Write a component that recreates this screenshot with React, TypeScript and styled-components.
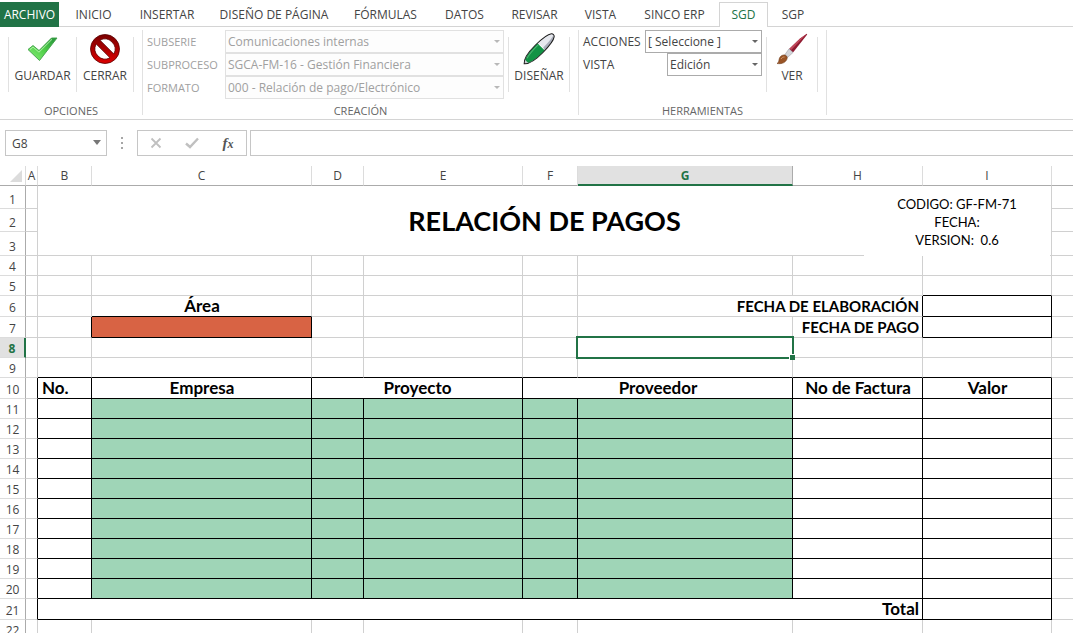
import React from "react";
import styled, { createGlobalStyle, css } from "styled-components";

const UI = `"Open Sans", "Noto Sans", sans-serif`;
const GREEN = "#217346";
const GRID = "#d0d0d0";
const BLACK = "#000000";

const GlobalStyle = createGlobalStyle`
  *, *::before, *::after { box-sizing: border-box; }
  html, body { margin: 0; height: 100%; }
  body { background: #fff; font-family: ${UI}; font-size: 12px; color: #444; overflow: hidden; }
  #root { height: 100%; }
  button, input, select { font: inherit; color: inherit; margin: 0; }
`;

const Window = styled.div`
  display: flex;
  flex-direction: column;
  height: 100vh;
  overflow: hidden;
`;

/* ---------- Tabs ---------- */

const TabBar = styled.nav`
  display: flex;
  height: 27px;
  padding-top: 2px;
  border-bottom: 1px solid #d4d4d4;
`;

const FileTab = styled.button`
  width: 59px;
  height: 25px;
  margin-right: 2px;
  padding: 0;
  border: 0;
  background: ${GREEN};
  color: #fff;
  white-space: nowrap;
`;

const Tab = styled.button<{ $width: number; $active?: boolean }>`
  flex: 0 0 ${(p) => p.$width}px;
  height: 25px;
  padding: 0 0 2px;
  border: 1px solid ${(p) => (p.$active ? "#d4d4d4" : "transparent")};
  border-bottom: 0;
  background: ${(p) => (p.$active ? "#fff" : "transparent")};
  color: ${(p) => (p.$active ? GREEN : "#444")};
  white-space: nowrap;
`;

/* ---------- Ribbon ---------- */

const Ribbon = styled.div`
  display: flex;
  height: 93px;
  padding: 3px 0 4px;
  border-bottom: 1px solid #d4d4d4;
`;

const Group = styled.section<{ $width: number }>`
  display: flex;
  flex-direction: column;
  justify-content: space-between;
  flex: 0 0 ${(p) => p.$width}px;
  border-right: 1px solid #e1e1e1;
`;

const GroupBody = styled.div<{ $pad?: number }>`
  display: flex;
  padding-left: ${(p) => p.$pad ?? 0}px;
`;

const GroupTitle = styled.h2`
  margin: 0;
  font-size: 11px;
  font-weight: 400;
  line-height: 8px;
  text-align: center;
  color: #666;
`;

const Commands = styled.div`
  display: flex;
  height: 55px;
  margin-top: 7px;
  border-left: 1px solid #e1e1e1;
`;

const Command = styled.button<{ $width: number }>`
  display: flex;
  flex-direction: column;
  align-items: center;
  width: ${(p) => p.$width}px;
  height: 55px;
  padding: 0;
  border: 0;
  border-right: 1px solid #e1e1e1;
  background: none;
  line-height: 16px;

  svg {
    display: block;
    flex: none;
    margin-top: -4px;
  }
`;

const CommandLabel = styled.span`
  margin-top: 3px;
`;

const Fields = styled.div<{ $width: number }>`
  display: flex;
  flex-direction: column;
  width: ${(p) => p.$width}px;
  margin-right: 4px;
`;

const Field = styled.div<{ $muted?: boolean }>`
  display: flex;
  justify-content: space-between;
  align-items: center;
  height: 23px;
  color: ${(p) => (p.$muted ? "#a0a0a0" : "#444")};

  label {
    font-size: ${(p) => (p.$muted ? 11 : 12)}px;
  }
`;

const SelectBox = styled.div<{ $width: number; $muted?: boolean }>`
  position: relative;
  width: ${(p) => p.$width}px;
  height: 23px;

  &::after {
    content: "";
    position: absolute;
    right: 4px;
    top: 10px;
    border: 3px solid transparent;
    border-top-color: ${(p) => (p.$muted ? "#b8b8b8" : "#666")};
    border-bottom: 0;
    pointer-events: none;
  }

  select {
    display: block;
    width: 100%;
    height: 23px;
    padding: 0 14px 0 2px;
    appearance: none;
    border: 1px solid ${(p) => (p.$muted ? "#e1e1e1" : "#ababab")};
    border-radius: 0;
    background: ${(p) => (p.$muted ? "#fdfdfd" : "#fff")};
    color: inherit;
    opacity: 1;
  }
`;

/* ---------- Formula bar ---------- */

const FormulaBar = styled.div`
  display: flex;
  align-items: center;
  padding: 10px 0 10px 5px;
`;

const NameBox = styled.div`
  position: relative;
  width: 102px;

  &::after {
    content: "";
    position: absolute;
    right: 6px;
    top: 10px;
    border: 4px solid transparent;
    border-top: 5px solid #777;
    border-bottom: 0;
  }

  input {
    display: block;
    width: 100%;
    height: 26px;
    padding: 0 20px 0 6px;
    border: 1px solid #c6c6c6;
    outline: 0;
  }
`;

const Grip = styled.svg`
  display: block;
  margin: 0 14px;
`;

const FormulaTools = styled.div`
  display: flex;
  width: 110px;
  height: 26px;
  margin-right: 3px;
  border: 1px solid #c6c6c6;

  button {
    display: flex;
    flex: 1;
    align-items: center;
    justify-content: center;
    padding: 0;
    border: 0;
    background: none;
  }
`;

const FormulaInput = styled.input`
  flex: 1;
  min-width: 0;
  height: 26px;
  border: 1px solid #c6c6c6;
  border-right: 0;
  outline: 0;
`;

const Fx = styled.span`
  font: italic bold 15px "Liberation Serif", serif;
  color: #555;

  small {
    font-size: 12px;
  }
`;

/* ---------- Sheet ---------- */

const SheetPane = styled.main`
  flex: 1;
  min-height: 0;
  overflow: hidden;
`;

const Sheet = styled.table`
  width: 100%;
  min-width: 1052px;
  table-layout: fixed;
  border-collapse: separate;
  border-spacing: 0;
`;

const Row = styled.tr<{ $height: number }>`
  height: ${(p) => p.$height}px;
`;

const ColHead = styled.th<{ $selected?: boolean }>`
  padding: 0;
  border-right: 1px solid #dcdcdc;
  border-bottom: 1px solid #ababab;
  font-weight: 400;
  line-height: 18px;

  &:last-child {
    border-right: 0;
  }
  ${(p) =>
    p.$selected &&
    css`
      border-right-color: #ababab;
      border-bottom: 2px solid ${GREEN};
      background: #e1e1e1;
      color: ${GREEN};
      font-weight: 700;
      line-height: 17px;
    `}
`;

const Corner = styled.td`
  padding: 0 3px 3px 0;
  border-right: 1px solid #dcdcdc;
  border-bottom: 1px solid #ababab;
  vertical-align: bottom;

  svg {
    display: block;
    margin-left: auto;
  }
`;

const RowHead = styled.th<{ $selected?: boolean }>`
  padding: 2px 0 0;
  border-right: 1px solid #ababab;
  border-bottom: 1px solid #dcdcdc;
  font-weight: 400;
  line-height: 16px;
  vertical-align: bottom;
  ${(p) =>
    p.$selected &&
    css`
      border-right: 2px solid ${GREEN};
      background: #e1e1e1;
      color: ${GREEN};
      font-weight: 700;
    `}
`;

type CellStyle = {
  $right?: string;
  $bottom?: string;
  $fill?: string;
  $align?: string;
  $caps?: boolean;
};

const Cell = styled.td<CellStyle>`
  position: relative;
  padding: 0 3px 0 4px;
  border-right: 1px solid ${(p) => p.$right ?? GRID};
  border-bottom: 1px solid ${(p) => p.$bottom ?? GRID};
  background: ${(p) => p.$fill ?? "transparent"};
  color: #000;
  font-family: Lato, sans-serif;
  font-size: ${(p) => (p.$caps ? 15 : 17)}px;
  font-weight: 700;
  line-height: 18px;
  text-align: ${(p) => p.$align ?? "left"};
  white-space: nowrap;

  &:last-child {
    border-right: 0;
  }
`;

const TitleCell = styled(Cell)`
  padding: 0;
`;

const TitleLayout = styled.div`
  display: grid;
  grid-template-columns: 1fr auto 1fr;
  align-items: center;
  height: 69px;
`;

const Title = styled.h1`
  grid-column: 2;
  margin: 0;
  font-size: 27px;
  line-height: 32px;
`;

const DocInfo = styled.p`
  position: absolute;
  right: 1px;
  top: 2px;
  width: 186px;
  height: 69px;
  margin: 0;
  padding-top: 7px;
  background: #fff;
  font: 400 13px/18px Lato, sans-serif;
  text-align: center;
  white-space: pre;
`;

const Selection = styled.div`
  position: absolute;
  z-index: 1;
  inset: -2px;
  border: 2px solid ${GREEN};

  &::after {
    content: "";
    position: absolute;
    right: -3px;
    bottom: -3px;
    width: 6px;
    height: 6px;
    border: 1px solid #fff;
    border-width: 1px 0 0 1px;
    background: ${GREEN};
  }
`;

/* ---------- Icons ---------- */

const CheckIcon = () => (
  <svg width="32" height="32" viewBox="0 0 32 32" aria-hidden="true">
    <defs>
      <linearGradient id="check" x1="0" y1="1" x2="1" y2="0">
        <stop offset="0" stopColor="#8cf07c" />
        <stop offset="0.5" stopColor="#4fcf48" />
        <stop offset="1" stopColor="#23913a" />
      </linearGradient>
    </defs>
    <path d="M1 16.500 L6 12.500 L12 17.500 L24.500 5 L30 5 L12.500 27.500 Z" fill="url(#check)" stroke="#3f9e48" strokeWidth="0.900" strokeLinejoin="round" />
    <path d="M3 16.500 L6 14 L12 19.200 L25 6.300" fill="none" stroke="#b9f5ae" strokeWidth="0.900" />
  </svg>
);

const ForbidIcon = () => (
  <svg width="32" height="32" viewBox="0 0 32 32" aria-hidden="true">
    <defs>
      <linearGradient id="forbid" x1="0" y1="0" x2="0" y2="1">
        <stop offset="0" stopColor="#7a0000" />
        <stop offset="1" stopColor="#dd0000" />
      </linearGradient>
    </defs>
    <path
      fillRule="evenodd"
      fill="url(#forbid)"
      stroke="#5a0000"
      strokeWidth="0.800"
      d="M16 1.500 A14.500 14.500 0 1 0 16 30.500 A14.500 14.500 0 1 0 16 1.500 Z M11 7.200 A10.200 10.200 0 0 1 24.800 21 Z M7.200 11 A10.200 10.200 0 0 0 21 24.800 Z"
    />
  </svg>
);

const PenIcon = () => (
  <svg width="32" height="32" viewBox="0 0 32 32" aria-hidden="true">
    <g transform="translate(16 16) rotate(-45)">
      <path d="M-21 0 L-17 -2.500 L-17 2.500 Z" fill="#c9ccd2" />
      <path d="M-17.500 -2.300 C-12 -4.800 -5 -5.400 3 -5.200 L3 5.200 C-5 5.400 -12 4.800 -17.500 2.300 Z" fill="#129345" />
      <path d="M-15 -1.800 C-10 -3.400 -4 -3.600 3 -3.400" fill="none" stroke="#4fb574" strokeWidth="1" />
      <path d="M3 -5.200 C10 -5 17 -3.800 19.500 -2 C20.800 -1 20.800 1 19.500 2 C17 3.800 10 5 3 5.200 Q5 0 3 -5.200 Z" fill="#e6e8ee" />
      <path d="M4 2 C10 2 15 1.500 20 .5 C19.500 3 12 4.800 3 5.200 Z" fill="#a9aebb" />
      <path
        d="M-21 0 C-18 -3.500 -9 -5.400 0 -5.300 C9 -5.200 17 -4 19.500 -2 C20.800 -1 20.800 1 19.500 2 C17 4 9 5.200 0 5.300 C-9 5.400 -18 3.500 -21 0 Z"
        fill="none"
        stroke="#1a1a1a"
        strokeWidth="1"
      />
    </g>
  </svg>
);

const BrushIcon = () => (
  <svg width="32" height="32" viewBox="0 0 32 32" aria-hidden="true">
    <path d="M30.800 .8 L31.200 1.400 L17 19.500 L13 16 L24 5.500 Z" fill="#8f1a30" />
    <path d="M30.800 .8 L15.200 17 L13.500 15.800 L24 5.800 Z" fill="#c34a5c" />
    <path d="M13 15.800 L17 19.500 L11.500 24.500 L8.800 21.800 Z" fill="#d3d5da" stroke="#90939b" strokeWidth="0.500" />
    <path d="M8.600 22 C11 22.500 12 24.500 10.500 27 C8.500 30.500 4.500 31 1 30.500 C3.500 29 2.500 27.500 3.500 25 C4.500 22.800 6.500 21.800 8.600 22 Z" fill="#9a5426" stroke="#6f3a18" strokeWidth="0.600" />
    <path d="M5 26 C6 24.500 7 24 8.500 24" fill="none" stroke="#d39a6c" strokeWidth="1" />
  </svg>
);

/* ---------- Data ---------- */

const TABS: [string, number][] = [
  ["INICIO", 65],
  ["INSERTAR", 82],
  ["DISEÑO DE PÁGINA", 132],
  ["FÓRMULAS", 91],
  ["DATOS", 67],
  ["REVISAR", 73],
  ["VISTA", 59],
  ["SINCO ERP", 89],
  ["SGD", 49],
  ["SGP", 50],
];

const COLUMNS: [string, number][] = [
  ["A", 12],
  ["B", 54],
  ["C", 220],
  ["D", 52],
  ["E", 159],
  ["F", 55],
  ["G", 215],
  ["H", 130],
  ["I", 129],
];

const CREATION = [
  { id: "subserie", label: "SUBSERIE", value: "Comunicaciones internas" },
  { id: "subproceso", label: "SUBPROCESO", value: "SGCA-FM-16 - Gestión Financiera" },
  { id: "formato", label: "FORMATO", value: "000 - Relación de pago/Electrónico" },
];

const ENTRY_ROWS = [11, 12, 13, 14, 15, 16, 17, 18, 19, 20];
const FILL = "#9fd5b7";

const blanks = (count: number) => Array.from({ length: count }, (_, i) => <Cell key={i} />);

const GridRow = ({
  n,
  height = 20,
  selected,
  children,
}: {
  n: number;
  height?: number;
  selected?: boolean;
  children: React.ReactNode;
}) => (
  <Row $height={height}>
    <RowHead scope="row" $selected={selected}>
      {n}
    </RowHead>
    {children}
  </Row>
);

const Dropdown = ({ id, value, width, muted }: { id: string; value: string; width: number; muted?: boolean }) => (
  <SelectBox $width={width} $muted={muted}>
    <select id={id} disabled={muted} defaultValue={value}>
      <option>{value}</option>
    </select>
  </SelectBox>
);

export default function App() {
  return (
    <Window>
      <GlobalStyle />
      <TabBar>
        <FileTab>ARCHIVO</FileTab>
        {TABS.map(([name, width]) => (
          <Tab key={name} $width={width} $active={name === "SGD"}>
            {name}
          </Tab>
        ))}
      </TabBar>

      <Ribbon>
        <Group $width={143}>
          <GroupBody $pad={8}>
            <Commands>
              <Command $width={68}>
                <CheckIcon />
                <CommandLabel>GUARDAR</CommandLabel>
              </Command>
              <Command $width={57}>
                <ForbidIcon />
                <CommandLabel>CERRAR</CommandLabel>
              </Command>
            </Commands>
          </GroupBody>
          <GroupTitle>OPCIONES</GroupTitle>
        </Group>

        <Group $width={436}>
          <GroupBody $pad={4}>
            <Fields $width={357}>
              {CREATION.map((f) => (
                <Field key={f.id} $muted>
                  <label htmlFor={f.id}>{f.label}</label>
                  <Dropdown id={f.id} value={f.value} width={279} muted />
                </Field>
              ))}
            </Fields>
            <Commands>
              <Command $width={61}>
                <PenIcon />
                <CommandLabel>DISEÑAR</CommandLabel>
              </Command>
            </Commands>
          </GroupBody>
          <GroupTitle>CREACIÓN</GroupTitle>
        </Group>

        <Group $width={248}>
          <GroupBody $pad={4}>
            <Fields $width={179}>
              <Field>
                <label htmlFor="acciones">ACCIONES</label>
                <Dropdown id="acciones" value="[ Seleccione ]" width={117} />
              </Field>
              <Field>
                <label htmlFor="vista">VISTA</label>
                <Dropdown id="vista" value="Edición" width={95} />
              </Field>
            </Fields>
            <Commands>
              <Command $width={51}>
                <BrushIcon />
                <CommandLabel>VER</CommandLabel>
              </Command>
            </Commands>
          </GroupBody>
          <GroupTitle>HERRAMIENTAS</GroupTitle>
        </Group>
      </Ribbon>

      <FormulaBar>
        <NameBox>
          <input aria-label="Cuadro de nombres" defaultValue="G8" />
        </NameBox>
        <Grip width="2" height="12" viewBox="0 0 2 12" aria-hidden="true">
          <path d="M0 0h2v2H0zM0 5h2v2H0zM0 10h2v2H0z" fill="#a6a6a6" />
        </Grip>
        <FormulaTools>
          <button aria-label="Cancelar">
            <svg width="12" height="12" viewBox="0 0 12 12">
              <path d="M1.500 1.500 L10.500 10.500 M10.500 1.500 L1.500 10.500" stroke="#c0c0c0" strokeWidth="1.800" />
            </svg>
          </button>
          <button aria-label="Introducir">
            <svg width="14" height="12" viewBox="0 0 14 12">
              <path d="M1 6.500 L5 10 L13 1.500" fill="none" stroke="#c0c0c0" strokeWidth="2.400" />
            </svg>
          </button>
          <button aria-label="Insertar función">
            <Fx>
              f<small>x</small>
            </Fx>
          </button>
        </FormulaTools>
        <FormulaInput aria-label="Barra de fórmulas" />
      </FormulaBar>

      <SheetPane>
        <Sheet>
          <colgroup>
            <col style={{ width: 26 }} />
            {COLUMNS.map(([name, width]) => (
              <col key={name} style={{ width }} />
            ))}
            <col />
          </colgroup>
          <thead>
            <Row $height={20}>
              <Corner>
                <svg width="12" height="12" viewBox="0 0 12 12" aria-hidden="true">
                  <path d="M12 0V12H0z" fill="#dcdcdc" />
                </svg>
              </Corner>
              {COLUMNS.map(([name]) => (
                <ColHead key={name} scope="col" $selected={name === "G"}>
                  {name}
                </ColHead>
              ))}
              <ColHead as="td" />
            </Row>
          </thead>
          <tbody>
            <GridRow n={1} height={23}>
              <Cell />
              <TitleCell colSpan={8} rowSpan={3}>
                <TitleLayout>
                  <Title>RELACIÓN DE PAGOS</Title>
                </TitleLayout>
                <DocInfo>{"CODIGO: GF-FM-71\nFECHA:\nVERSION:  0.6"}</DocInfo>
              </TitleCell>
              <Cell />
            </GridRow>
            <GridRow n={2} height={23}>
              {blanks(2)}
            </GridRow>
            <GridRow n={3} height={24}>
              {blanks(2)}
            </GridRow>
            <GridRow n={4}>{blanks(10)}</GridRow>
            <GridRow n={5}>
              {blanks(8)}
              <Cell $bottom={BLACK} />
              <Cell />
            </GridRow>
            <GridRow n={6} height={21}>
              {blanks(2)}
              <Cell $align="center" $bottom={BLACK}>
                Área
              </Cell>
              {blanks(3)}
              <Cell colSpan={2} $caps $align="right" $right={BLACK}>
                FECHA DE ELABORACIÓN
              </Cell>
              <Cell $right={BLACK} $bottom={BLACK} />
              <Cell />
            </GridRow>
            <GridRow n={7} height={21}>
              <Cell />
              <Cell $right={BLACK} />
              <Cell $fill="#d86344" $right={BLACK} $bottom={BLACK} />
              {blanks(4)}
              <Cell $caps $align="right" $right={BLACK}>
                FECHA DE PAGO
              </Cell>
              <Cell $right={BLACK} $bottom={BLACK} />
              <Cell />
            </GridRow>
            <GridRow n={8} selected>
              {blanks(6)}
              <Cell>
                <Selection />
              </Cell>
              {blanks(3)}
            </GridRow>
            <GridRow n={9}>
              <Cell />
              {COLUMNS.slice(1).map(([name]) => (
                <Cell key={name} $bottom={BLACK} />
              ))}
              <Cell />
            </GridRow>
            <GridRow n={10} height={21}>
              <Cell $right={BLACK} />
              <Cell $right={BLACK} $bottom={BLACK}>
                No.
              </Cell>
              <Cell $align="center" $right={BLACK} $bottom={BLACK}>
                Empresa
              </Cell>
              <Cell colSpan={2} $align="center" $right={BLACK} $bottom={BLACK}>
                Proyecto
              </Cell>
              <Cell colSpan={2} $align="center" $right={BLACK} $bottom={BLACK}>
                Proveedor
              </Cell>
              <Cell $align="center" $right={BLACK} $bottom={BLACK}>
                No de Factura
              </Cell>
              <Cell $align="center" $right={BLACK} $bottom={BLACK}>
                Valor
              </Cell>
              <Cell />
            </GridRow>
            {ENTRY_ROWS.map((n) => (
              <GridRow key={n} n={n}>
                <Cell $right={BLACK} />
                {COLUMNS.slice(1).map(([name]) => (
                  <Cell key={name} $right={BLACK} $bottom={BLACK} $fill={"CDEFG".includes(name) ? FILL : undefined} />
                ))}
                <Cell />
              </GridRow>
            ))}
            <GridRow n={21} height={21}>
              <Cell $right={BLACK} />
              <Cell colSpan={7} $align="right" $right={BLACK} $bottom={BLACK}>
                Total
              </Cell>
              <Cell $right={BLACK} $bottom={BLACK} />
              <Cell />
            </GridRow>
            <GridRow n={22}>{blanks(10)}</GridRow>
          </tbody>
        </Sheet>
      </SheetPane>
    </Window>
  );
}
